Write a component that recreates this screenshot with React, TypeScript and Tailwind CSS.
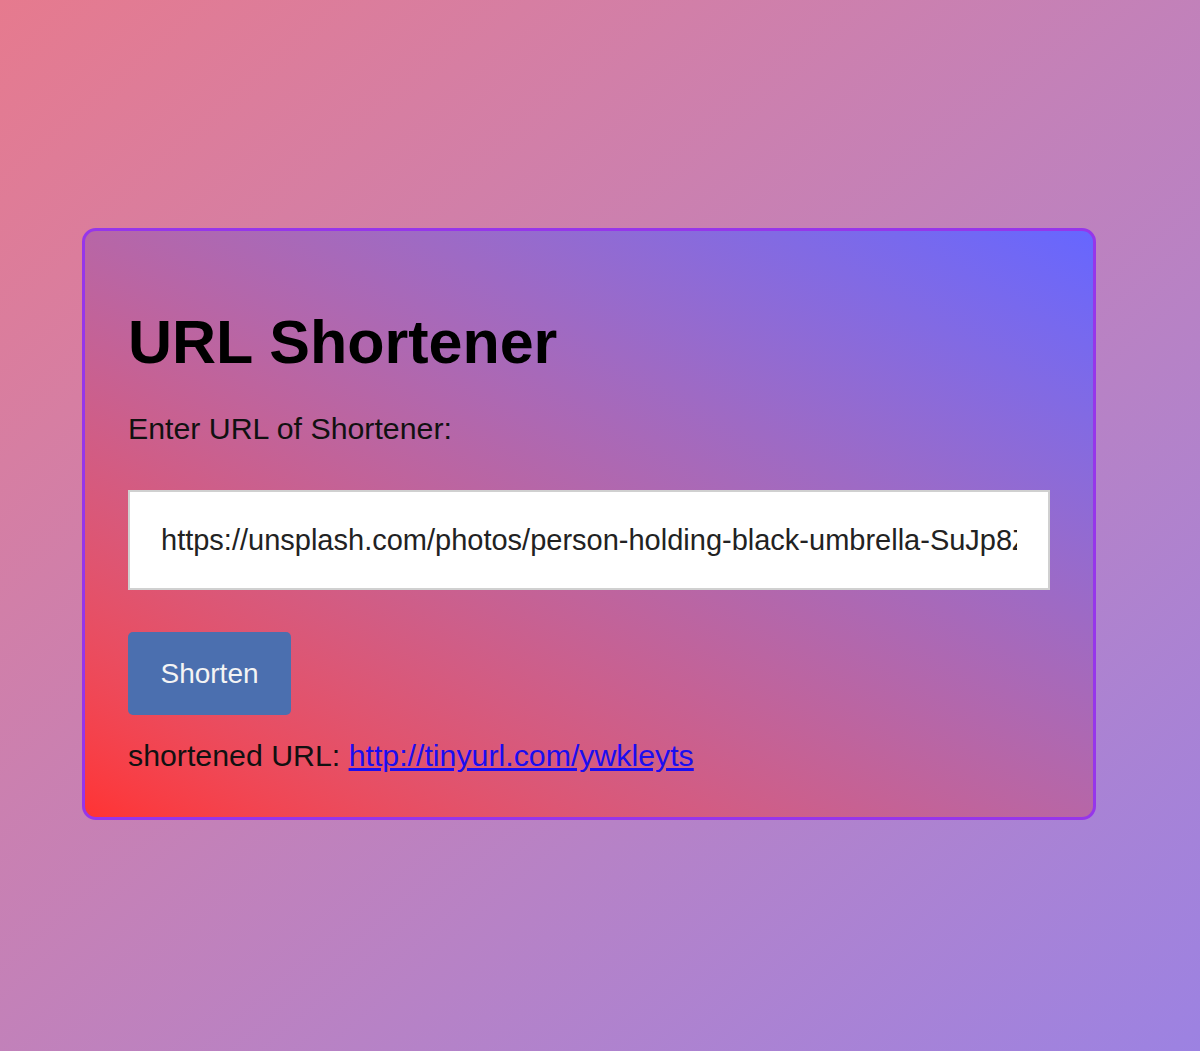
import React, { useState } from 'react';

const App: React.FC = () => {
  const [url, setUrl] = useState(
    'https://unsplash.com/photos/person-holding-black-umbrella-SuJp8Z'
  );
  const shortUrl = 'http://tinyurl.com/ywkleyts';

  return (
    <div
      className="min-h-[1051px] w-full bg-gradient-to-br from-[#e67a8e] to-[#9c82e2] pt-[228px] pl-[82px]"
      style={{ fontFamily: '"Liberation Sans", Arial, sans-serif' }}
    >
      <div className="w-[1014px] rounded-[14px] border-[3px] border-[#9636ea] bg-gradient-to-tr from-[#ff3333] to-[#6666ff] px-[43px] pt-[77px] pb-[44px]">
        <h1 className="text-[61px] font-bold leading-[69px] text-black">URL Shortener</h1>
        <label htmlFor="url" className="mt-[34px] block text-[30.3px] leading-[35px] text-[#111]">
          Enter URL of Shortener:
        </label>
        <input
          id="url"
          type="text"
          value={url}
          onChange={(e) => setUrl(e.target.value)}
          className="mt-[44px] block h-[100px] w-full border-2 border-[#d0d0d0] bg-white pl-[31px] pr-[31px] text-[29px] text-[#222] outline-none"
        />
        <button className="mt-[42px] block h-[83px] w-[163px] rounded-[5px] bg-[#4b6faf] text-[28px] text-[#f4f4f4]">
          Shorten
        </button>
        <p className="mt-[23px] text-[30.3px] leading-[35px] text-[#111]">
          shortened URL:{' '}
          <a href={shortUrl} className="text-[#1a0df0] underline">
            {shortUrl}
          </a>
        </p>
      </div>
    </div>
  );
};

export default App;
